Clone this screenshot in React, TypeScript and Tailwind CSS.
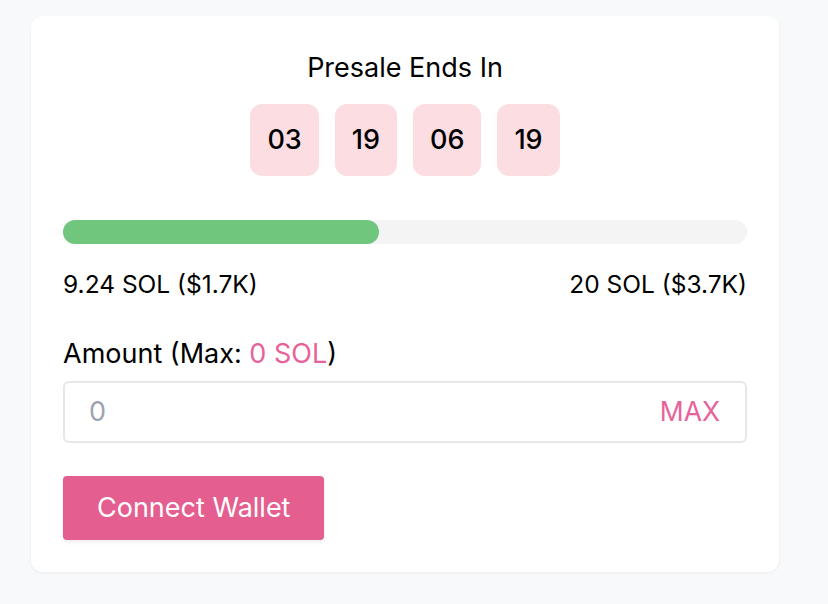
import React from "react";

export default function App() {
  const raised = 9.24;
  const goal = 20;
  const pct = (raised / goal) * 100;
  const parts = ["03", "19", "06", "19"];
  return (
    <div className="min-h-screen w-full bg-[#f8f9fb] pt-4 pl-[31px]" style={{ fontFamily: "Inter, 'Noto Sans', sans-serif" }}>
      <div className="w-[748px] rounded-xl bg-white px-8 pt-[36px] pb-8 shadow-[0_1px_3px_rgba(0,0,0,0.06)]">
        <div className="text-center text-[27px] leading-8 text-black">Presale Ends In</div>
        <div className="mt-5 flex justify-center gap-4">
          {parts.map((p, i) => (
            <div key={i} className="flex h-[72px] items-center justify-center rounded-xl bg-[#fbdde2] px-[17px] text-[27px] font-medium text-black">
              {p}
            </div>
          ))}
        </div>
        <div className="mt-11 h-6 w-full rounded-full bg-[#f4f4f4]">
          <div className="h-6 rounded-full bg-[#6fc67c]" style={{ width: `${pct}%` }} />
        </div>
        <div className="mt-6 flex justify-between text-[24.5px] leading-8 text-black">
          <span>9.24 SOL ($1.7K)</span>
          <span>20 SOL ($3.7K)</span>
        </div>
        <div className="mt-[38px] text-[27px] leading-8 text-black">
          Amount (Max: <span className="text-[#e8629a]">0 SOL</span>)
        </div>
        <div className="mt-[11px] flex h-[62px] items-center justify-between rounded-md border-2 border-[#e5e7eb] pl-6 pr-[25px]">
          <span className="text-[27px] text-[#9ca3af]">0</span>
          <span className="text-[26.5px] text-[#e8629a]">MAX</span>
        </div>
        <button className="mt-[33px] flex h-16 items-center rounded bg-[#e45e8f] px-[34px] text-[27px] text-white shadow-[0_2px_4px_rgba(0,0,0,0.08)]">
          Connect Wallet
        </button>
      </div>
    </div>
  );
}
